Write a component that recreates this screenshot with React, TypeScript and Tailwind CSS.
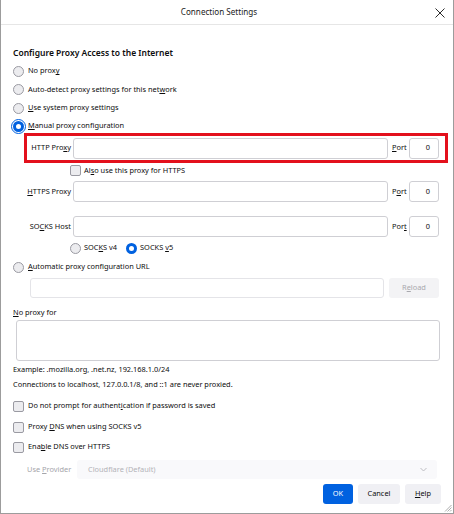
import React from 'react';

const font = { fontFamily: '"Noto Sans", "Liberation Sans", sans-serif' };

const U: React.FC<{ children: React.ReactNode }> = ({ children }) => (
  <span className="underline underline-offset-[1px]">{children}</span>
);

const Radio: React.FC<{ checked?: boolean; focused?: boolean }> = ({ checked, focused }) => {
  if (checked) {
    return (
      <span
        className={
          'box-border inline-block h-[11px] w-[11px] shrink-0 rounded-full border-[3px] border-[#0061e0] bg-white ' +
          (focused ? 'outline outline-[1.5px] outline-offset-[1px] outline-[#0061e0]' : '')
        }
      />
    );
  }
  return (
    <span className="box-border inline-block h-[11px] w-[11px] shrink-0 rounded-full border border-[#9a9aa2] bg-[#ececef]" />
  );
};

const Checkbox: React.FC = () => (
  <span className="box-border inline-block h-[11px] w-[11px] shrink-0 rounded-[2px] border border-[#9a9aa2] bg-[#ececef]" />
);

const TextBox: React.FC<{ className?: string; value?: string; disabled?: boolean }> = ({
  className = '',
  value,
  disabled,
}) => (
  <div
    className={
      'box-border flex items-center justify-end rounded-[3px] border px-[8px] text-[7.4px] ' +
      (disabled ? 'border-[#e4e4e8] bg-white' : 'border-[#cfcfd4] bg-white') +
      ' ' +
      className
    }
  >
    {value}
  </div>
);

const ProxyRow: React.FC<{ label: React.ReactNode; port: React.ReactNode }> = ({ label, port }) => (
  <div className="flex h-[23px] items-center">
    <div className="flex w-[44px] justify-end whitespace-nowrap">{label}</div>
    <TextBox className="ml-[2px] h-[21px] w-[315px]" />
    <div className="ml-[4px] w-[14px] whitespace-nowrap">{port}</div>
    <TextBox className="ml-[3px] h-[21px] w-[30px]" value="0" />
  </div>
);

export default function App() {
  return (
    <div
      style={font}
      className="box-border flex h-[514px] w-[454px] flex-col border-x border-b border-[#9c9c9c] bg-white text-[7.4px] text-[#0c0c0d]"
    >
      {/* Title bar */}
      <div className="relative flex h-[25px] shrink-0 items-center justify-center border-b border-[#e6e6e6] pr-[16px]">
        <span className="text-[8.1px] text-[#1b1b1b]">Connection Settings</span>
        <svg
          className="absolute right-[8px] top-[8px]"
          width="10"
          height="10"
          viewBox="0 0 10 10"
          fill="none"
          stroke="#2b2b2b"
          strokeWidth="1"
        >
          <path d="M0.5 0.5 L9.5 9.5 M9.5 0.5 L0.5 9.5" />
        </svg>
      </div>

      <div className="flex flex-col pl-[12px] pr-[11px]">
        <div className="mt-[20px] flex h-[16px] items-center whitespace-nowrap text-[8.5px] font-semibold">
          Configure Proxy Access to the Internet
        </div>

        <div className="mt-[1px] flex h-[18px] items-center gap-[4px]">
          <Radio />
          <span>
            No prox<U>y</U>
          </span>
        </div>
        <div className="flex h-[19px] items-center gap-[4px]">
          <Radio />
          <span>
            Auto-detect proxy settings for this net<U>w</U>ork
          </span>
        </div>
        <div className="flex h-[18px] items-center gap-[4px]">
          <Radio />
          <span>
            <U>U</U>se system proxy settings
          </span>
        </div>
        <div className="flex h-[16px] items-center gap-[4px] pt-[2px]">
          <Radio checked focused />
          <span>
            <U>M</U>anual proxy configuration
          </span>
        </div>

        {/* Highlighted HTTP proxy row */}
        <div className="ml-[11px] box-border h-[30px] w-[424px] border-[3px] border-[#e3101c]">
          <div className="flex h-[24px] items-center">
            <div className="flex w-[44px] justify-end whitespace-nowrap">
              <span>
                HTTP Pro<U>x</U>y
              </span>
            </div>
            <TextBox className="ml-[2px] h-[21px] w-[315px]" />
            <div className="ml-[4px] w-[14px]">
              <U>P</U>ort
            </div>
            <TextBox className="ml-[3px] h-[21px] w-[30px]" value="0" />
          </div>
        </div>

        <div className="ml-[57px] flex h-[15px] items-center gap-[3px]">
          <Checkbox />
          <span>
            Al<U>s</U>o use this proxy for HTTPS
          </span>
        </div>

        <div className="ml-[14px] mt-[2px]">
          <ProxyRow
            label={
              <span>
                <U>H</U>TTPS Proxy
              </span>
            }
            port={
              <>
                P<U>o</U>rt
              </>
            }
          />
        </div>
        <div className="ml-[14px] mt-[12px]">
          <ProxyRow
            label={
              <span>
                SO<U>C</U>KS Host
              </span>
            }
            port={
              <>
                Por<U>t</U>
              </>
            }
          />
        </div>

        <div className="ml-[57px] mt-[2px] flex h-[16px] items-center">
          <Radio />
          <span className="ml-[3px]">
            SOC<U>K</U>S v4
          </span>
          <span className="ml-[9px] flex">
            <Radio checked />
          </span>
          <span className="ml-[3px]">
            SOCKS <U>v</U>5
          </span>
        </div>

        <div className="mt-[3px] flex h-[16px] items-center gap-[4px]">
          <Radio />
          <span>
            <U>A</U>utomatic proxy configuration URL
          </span>
        </div>

        <div className="mt-[2px] flex h-[22px] items-center">
          <TextBox className="ml-[17px] h-[20px] w-[354px]" disabled />
          <div className="ml-[5px] flex h-[20px] w-[50px] items-center justify-center rounded-[3px] bg-[#f3f3f5] text-[#a9a9ae]">
            <span>
              R<U>e</U>load
            </span>
          </div>
        </div>

        <div className="mt-[7px] flex h-[13px] items-center">
          <span>
            <U>N</U>o proxy for
          </span>
        </div>
        <TextBox className="ml-[3px] mt-[1px] h-[41px] w-[424px]" />

        <div className="mt-[2px] flex h-[14px] items-center">
          Example: .mozilla.org, .net.nz, 192.168.1.0/24
        </div>
        <div className="mt-[1px] flex h-[14px] items-center">
          Connections to localhost, 127.0.0.1/8, and ::1 are never proxied.
        </div>

        <div className="mt-[6px] flex h-[16px] items-center gap-[4px]">
          <Checkbox />
          <span>
            Do not prompt for authent<U>i</U>cation if password is saved
          </span>
        </div>
        <div className="mt-[5px] flex h-[16px] items-center gap-[4px]">
          <Checkbox />
          <span>
            Proxy <U>D</U>NS when using SOCKS v5
          </span>
        </div>
        <div className="mt-[4px] flex h-[16px] items-center gap-[4px]">
          <Checkbox />
          <span>
            Ena<U>b</U>le DNS over HTTPS
          </span>
        </div>

        <div className="mt-[5px] flex h-[19px] items-center">
          <span className="ml-[14px] w-[50px] whitespace-nowrap text-[#a5a5aa]">
            Use <U>P</U>rovider
          </span>
          <div className="flex h-[19px] w-[360px] items-center justify-between rounded-[3px] bg-[#f9f9fb] pl-[11px] pr-[10px] text-[#b3b3b8]">
            <span>Cloudflare (Default)</span>
            <svg width="7" height="5" viewBox="0 0 7 5" fill="none" stroke="#bdbdc2" strokeWidth="1">
              <path d="M0.5 1 L3.5 4 L6.5 1" />
            </svg>
          </div>
        </div>

        <div className="mt-[5px] flex justify-end gap-[5px] pr-[1px]">
          <button className="h-[20px] w-[30px] rounded-[3px] bg-[#0061e0] text-[7.4px] text-white">OK</button>
          <button className="h-[20px] w-[42px] rounded-[3px] bg-[#f0f0f4] text-[7.4px]">Cancel</button>
          <button className="h-[20px] w-[36px] rounded-[3px] bg-[#f0f0f4] text-[7.4px]">
            <U>H</U>elp
          </button>
        </div>
      </div>

      {/* resize grip */}
      <div className="relative flex-1">
        <svg
          className="absolute bottom-[1px] right-[1px]"
          width="8"
          height="8"
          viewBox="0 0 8 8"
          fill="none"
          stroke="#9a9a9a"
          strokeWidth="0.8"
        >
          <path d="M7.5 1 L1 7.5 M7.5 3.5 L3.5 7.5 M7.5 6 L6 7.5" />
        </svg>
      </div>
    </div>
  );
}
